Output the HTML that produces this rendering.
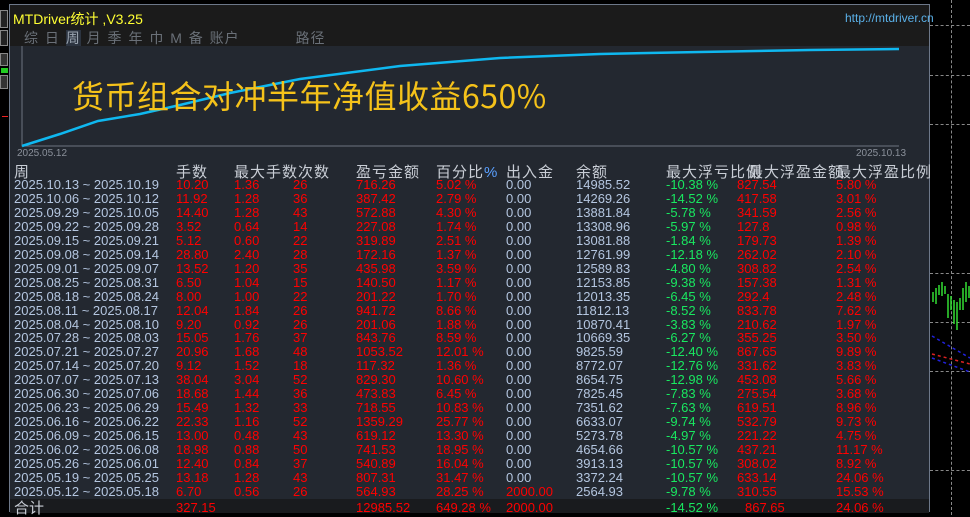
<!DOCTYPE html>
<html><head><meta charset="utf-8"><style>
*{margin:0;padding:0;box-sizing:border-box}
body{width:970px;height:515px;background:#000;position:relative;overflow:hidden;font-family:"Liberation Sans","Noto Sans CJK SC",sans-serif}
.a{position:absolute;white-space:nowrap}
#panel{position:absolute;left:9px;top:4px;width:921px;height:508px;background:#232830;border:1px solid #6d7889;border-bottom:none}
#hdr{position:absolute;left:0;top:0;width:100%;height:41px;background:#1b1b1b}
.t{font-size:13px;line-height:14px}
.h{font-size:15px;letter-spacing:1px;color:#c9ced6;top:161px}
.r{color:#f00}.g{color:#19e860}.w{color:#b4c6e0}
</style></head><body>
<div class="a" style="left:0;top:10px;width:8px;height:18px;border:1px solid #888;background:#222"></div>
<div class="a" style="left:0;top:30px;width:8px;height:16px;border:1px solid #888;background:#222"></div>
<div class="a" style="left:0;top:53px;width:8px;height:13px;border:1px solid #888;background:#333"></div>
<div class="a" style="left:1px;top:68px;width:7px;height:5px;background:#2c2;"></div>
<div class="a" style="left:0;top:75px;width:8px;height:14px;border:1px solid #888;background:#333"></div>
<div class="a" style="left:2px;top:116px;width:6px;height:1px;border-top:1px dashed #e22"></div>
<div class="a" style="left:951px;top:0;height:515px;border-left:1px dashed #888"></div>
<div class="a" style="left:930px;top:25px;width:40px;border-top:1px dashed #888"></div>
<div class="a" style="left:930px;top:75px;width:40px;border-top:1px dashed #888"></div>
<div class="a" style="left:930px;top:124px;width:40px;border-top:1px dashed #888"></div>
<div class="a" style="left:930px;top:273px;width:40px;border-top:1px dashed #888"></div>
<div class="a" style="left:930px;top:322px;width:40px;border-top:1px dashed #888"></div>
<div class="a" style="left:930px;top:371px;width:40px;border-top:1px dashed #888"></div>
<div class="a" style="left:930px;top:470px;width:40px;border-top:1px dashed #888"></div>
<svg class="a" style="left:930px;top:280px" width="40" height="100">
<g stroke="#3d3" stroke-width="1.5"><path d="M3 12v10M6 8v16M9 5v10M12 2v14M15 6v8M18 14v24M21 16v14M24 20v24M27 22v28M30 18v12M33 8v22M36 2v20M39 6v12"/></g>
<g stroke="#22d" stroke-width="1.5" stroke-dasharray="3 3"><path d="M2 78l38 14M2 56l38 22"/></g>
<path d="M2 74l38 10" stroke="#d22" stroke-width="1.5" stroke-dasharray="3 3"/>
</svg>
<div id="panel">
 <div id="hdr">
  <div class="a" style="left:3px;top:4px;font-size:14px;color:#ffff33">MTDriver统计 ,V3.25</div>
  <div class="a" style="left:835px;top:6px;font-size:12px;color:#5ab0e8">http://mtdriver.cn</div>
  <div class="a" style="left:14px;top:23px;font-size:14px;color:#6a7078;letter-spacing:1px;word-spacing:1px">综 日 <span style="background:#2c3440;color:#9aa4b0">周</span> 月 季 年 巾 M 备 账户 <span style="margin-left:50px">路径</span></div>
 </div>
 <svg class="a" style="left:0;top:41px" width="921" height="120">
  <path d="M12 0V100H889" stroke="#6d7480" fill="none"/>
  <polyline fill="none" stroke="#0fb8f0" stroke-width="2.5" points="12,100 50,88 88,75 130,68 170,59 220,47 290,33 390,20 490,12 590,8 690,6 800,4 889,3"/>
 </svg>
 <div class="a" style="left:7px;top:143px;font-size:10px;color:#8a909a">2025.05.12</div>
 <div class="a" style="left:846px;top:143px;font-size:10px;color:#8a909a">2025.10.13</div>
 <div class="a" style="left:62px;top:67px;font-size:32px;letter-spacing:0.5px;color:#f5c21a;font-family:'Noto Sans CJK SC',sans-serif">货币组合对冲半年净值收益650%</div>
 <div class="a" style="left:0;top:494px;width:919px;height:14px;background:#191b1e"></div>
</div>
<div class="a h" style="left:14px">周</div>
<div class="a h" style="left:176px">手数</div>
<div class="a h" style="left:234px">最大手数次数</div>
<div class="a h" style="left:356px">盈亏金额</div>
<div class="a h" style="left:436px">百分比<span style="color:#5aa0ff">%</span></div>
<div class="a h" style="left:506px">出入金</div>
<div class="a h" style="left:576px">余额</div>
<div class="a h" style="left:666px">最大浮亏比例</div>
<div class="a h" style="left:748px">最大浮盈金额</div>
<div class="a h" style="left:836px">最大浮盈比例</div>
<div id="rows"></div>
<div class="a t" style="left:14px;top:502px;font-size:15px;color:#c9ced6">合计</div>
<div class="a t r" style="left:176px;top:501px">327.15</div>
<div class="a t r" style="left:356px;top:501px">12985.52</div>
<div class="a t r" style="left:436px;top:501px">649.28 %</div>
<div class="a t r" style="left:506px;top:501px">2000.00</div>
<div class="a t g" style="left:666px;top:501px">-14.52 %</div>
<div class="a t r" style="left:745px;top:501px">867.65</div>
<div class="a t r" style="left:836px;top:501px">24.06 %</div>
<script>
var d=[
["2025.10.13 ~ 2025.10.19","10.20","1.36","26","716.26","5.02 %","0.00","14985.52","-10.38 %","827.54","5.80 %"],
["2025.10.06 ~ 2025.10.12","11.92","1.28","36","387.42","2.79 %","0.00","14269.26","-14.52 %","417.58","3.01 %"],
["2025.09.29 ~ 2025.10.05","14.40","1.28","43","572.88","4.30 %","0.00","13881.84","-5.78 %","341.59","2.56 %"],
["2025.09.22 ~ 2025.09.28","3.52","0.64","14","227.08","1.74 %","0.00","13308.96","-5.97 %","127.8","0.98 %"],
["2025.09.15 ~ 2025.09.21","5.12","0.60","22","319.89","2.51 %","0.00","13081.88","-1.84 %","179.73","1.39 %"],
["2025.09.08 ~ 2025.09.14","28.80","2.40","28","172.16","1.37 %","0.00","12761.99","-12.18 %","262.02","2.10 %"],
["2025.09.01 ~ 2025.09.07","13.52","1.20","35","435.98","3.59 %","0.00","12589.83","-4.80 %","308.82","2.54 %"],
["2025.08.25 ~ 2025.08.31","6.50","1.04","15","140.50","1.17 %","0.00","12153.85","-9.38 %","157.38","1.31 %"],
["2025.08.18 ~ 2025.08.24","8.00","1.00","22","201.22","1.70 %","0.00","12013.35","-6.45 %","292.4","2.48 %"],
["2025.08.11 ~ 2025.08.17","12.04","1.84","26","941.72","8.66 %","0.00","11812.13","-8.52 %","833.78","7.62 %"],
["2025.08.04 ~ 2025.08.10","9.20","0.92","26","201.06","1.88 %","0.00","10870.41","-3.83 %","210.62","1.97 %"],
["2025.07.28 ~ 2025.08.03","15.05","1.76","37","843.76","8.59 %","0.00","10669.35","-6.27 %","355.25","3.50 %"],
["2025.07.21 ~ 2025.07.27","20.96","1.68","48","1053.52","12.01 %","0.00","9825.59","-12.40 %","867.65","9.89 %"],
["2025.07.14 ~ 2025.07.20","9.12","1.52","18","117.32","1.36 %","0.00","8772.07","-12.76 %","331.62","3.83 %"],
["2025.07.07 ~ 2025.07.13","38.04","3.04","52","829.30","10.60 %","0.00","8654.75","-12.98 %","453.08","5.66 %"],
["2025.06.30 ~ 2025.07.06","18.68","1.44","36","473.83","6.45 %","0.00","7825.45","-7.83 %","275.54","3.68 %"],
["2025.06.23 ~ 2025.06.29","15.49","1.32","33","718.55","10.83 %","0.00","7351.62","-7.63 %","619.51","8.96 %"],
["2025.06.16 ~ 2025.06.22","22.33","1.16","52","1359.29","25.77 %","0.00","6633.07","-9.74 %","532.79","9.73 %"],
["2025.06.09 ~ 2025.06.15","13.00","0.48","43","619.12","13.30 %","0.00","5273.78","-4.97 %","221.22","4.75 %"],
["2025.06.02 ~ 2025.06.08","18.98","0.88","50","741.53","18.95 %","0.00","4654.66","-10.57 %","437.21","11.17 %"],
["2025.05.26 ~ 2025.06.01","12.40","0.84","37","540.89","16.04 %","0.00","3913.13","-10.57 %","308.02","8.92 %"],
["2025.05.19 ~ 2025.05.25","13.18","1.28","43","807.31","31.47 %","0.00","3372.24","-10.57 %","633.14","24.06 %"],
["2025.05.12 ~ 2025.05.18","6.70","0.56","26","564.93","28.25 %","2000.00","2564.93","-9.78 %","310.55","15.53 %"]];
var xs=[14,176,234,293,356,436,506,576,666,737,836],cl=["w","r","r","r","r","r","w","w","g","r","r"],h="";
d.forEach(function(r,i){var y=178+i*13.95;r.forEach(function(v,j){var c=cl[j];if(j==6&&v!="0.00")c="r";h+='<div class="a t '+c+'" style="left:'+xs[j]+'px;top:'+y.toFixed(1)+'px">'+v+'</div>';});});
document.getElementById("rows").innerHTML=h;
</script>
</body></html>
